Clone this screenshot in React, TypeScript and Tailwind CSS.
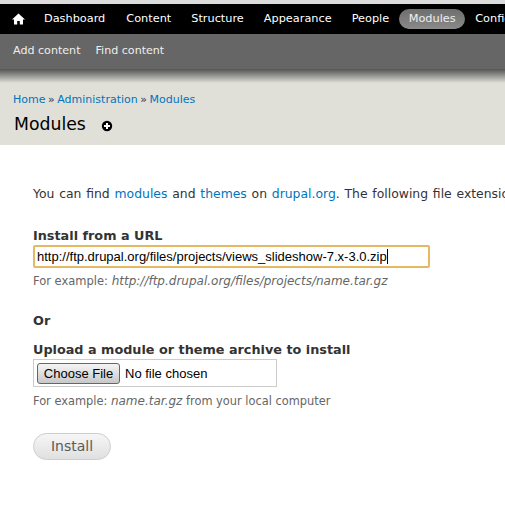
import React from 'react'

const font = { fontFamily: '"DejaVu Sans", Verdana, sans-serif' }

const navItems = ['Dashboard', 'Content', 'Structure', 'Appearance', 'People', 'Modules', 'Configuration']

const HomeIcon = () => (
  <svg width="13" height="12" viewBox="0 0 13 12" fill="#fff" className="block">
    <path d="M6.5 0.5 L13 6.5 L11 6.5 L11 11.5 L7.8 11.5 L7.8 8 L5.2 8 L5.2 11.5 L2 11.5 L2 6.5 L0 6.5 Z" />
  </svg>
)

const PlusIcon = () => (
  <svg width="12" height="12" viewBox="0 0 12 12" className="block">
    <circle cx="6" cy="6" r="5.2" fill="#000" />
    <path d="M6 3 V9 M3 6 H9" stroke="#fff" strokeWidth="2" />
  </svg>
)

export default function App() {
  return (
    <div className="w-[505px] h-[522px] overflow-hidden bg-white" style={font}>
      <div className="h-1 bg-[#dcdcdc]" />
      <div className="h-[30px] bg-black flex items-center whitespace-nowrap text-[11.3px] text-white overflow-hidden">
        <div className="w-[44px] pl-[12px] shrink-0">
          <HomeIcon />
        </div>
        {navItems.map((item, i) =>
          item === 'Modules' ? (
            <span
              key={item}
              className="h-5 mr-[10px] w-[66px] shrink-0 justify-center ml-[-10px] rounded-full bg-gradient-to-b from-[#6e6e6e] to-[#8a8a8a] text-[#eee] flex items-center"
            >
              {item}
            </span>
          ) : (
            <span key={item} className={i === 0 ? 'mr-[21px] shrink-0' : 'mr-[20px] shrink-0'}>
              {item}
            </span>
          ),
        )}
      </div>
      <div className="h-[35px] bg-[#666] flex items-center gap-[15px] pl-[13px] text-[11.1px] text-[#eee] whitespace-nowrap">
        <span>Add content</span>
        <span>Find content</span>
      </div>
      <div className="h-[76px] bg-[#e0e0d8] relative">
        <div className="h-[14px] bg-gradient-to-b from-[#555] to-[#e0e0d8]" />
        <div className="pl-[13px] pt-[10px] text-[11px] leading-[14px] text-[#333] flex gap-[2.5px]">
          <a className="text-[#0074bd]">Home</a>
          <span>»</span>
          <a className="text-[#0074bd]">Administration</a>
          <span>»</span>
          <a className="text-[#0074bd]">Modules</a>
        </div>
        <div className="pl-[14px] pt-[5px] flex items-center text-[#000]">
          <h1 className="text-[17.3px] leading-[24px] font-normal">Modules</h1>
          <span className="ml-[15px] mt-[3px]">
            <PlusIcon />
          </span>
        </div>
      </div>
      <div className="pl-[33px] text-[#333] whitespace-nowrap overflow-hidden">
        <p className="pt-[40px] text-[12.4px] leading-[18px] [word-spacing:0.85px]">
          You can find <a className="text-[#0074bd]">modules</a> and <a className="text-[#0074bd]">themes</a> on{' '}
          <a className="text-[#0074bd]">drupal.org</a>. The following file extensions are supported
        </p>
        <label className="block mt-[25px] text-[12.8px] leading-[16px] font-bold">Install from a URL</label>
        <div className="mt-[1px] w-[397px] h-[23px] border-2 border-[#e5b864] rounded-[2px] flex items-center pl-[2px] text-[13px] text-black" style={{ fontFamily: '"Liberation Sans", Arial, sans-serif' }}>
          <span>http://ftp.drupal.org/files/projects/views_slideshow-7.x-3.0.zip</span>
          <span className="w-px h-[15px] bg-black" />
        </div>
        <p className="mt-[6px] text-[11.5px] leading-[14px] text-[#666]">
          For example: <em className="text-[12px]">http://ftp.drupal.org/files/projects/name.tar.gz</em>
        </p>
        <div className="mt-[25px] text-[12.8px] leading-[16px] font-bold">Or</div>
        <label className="block mt-[13px] text-[12.8px] leading-[16px] font-bold">Upload a module or theme archive to install</label>
        <div className="mt-[1px] w-[244px] h-[28px] border border-[#ccc] flex items-center pl-[3px] pt-[1px] text-[13px] text-black" style={{ fontFamily: '"Liberation Sans", Arial, sans-serif' }}>
          <span className="h-[21px] w-[83px] flex items-center justify-center border border-[#666] rounded-[3px] bg-gradient-to-b from-[#f5f5f5] to-[#c8c8c8]">Choose File</span>
          <span className="ml-[5px]">No file chosen</span>
        </div>
        <p className="mt-[7px] text-[11.4px] leading-[14px] text-[#666]">
          For example: <em className="text-[12px]">name.tar.gz</em> from your local computer
        </p>
        <div className="mt-[25px] w-[78px] h-[27px] border border-[#ccc] rounded-full bg-gradient-to-b from-[#f6f6f6] to-[#e0e0e0] flex items-center justify-center text-[14px] text-[#5a5a5a]">
          Install
        </div>
      </div>
    </div>
  )
}
